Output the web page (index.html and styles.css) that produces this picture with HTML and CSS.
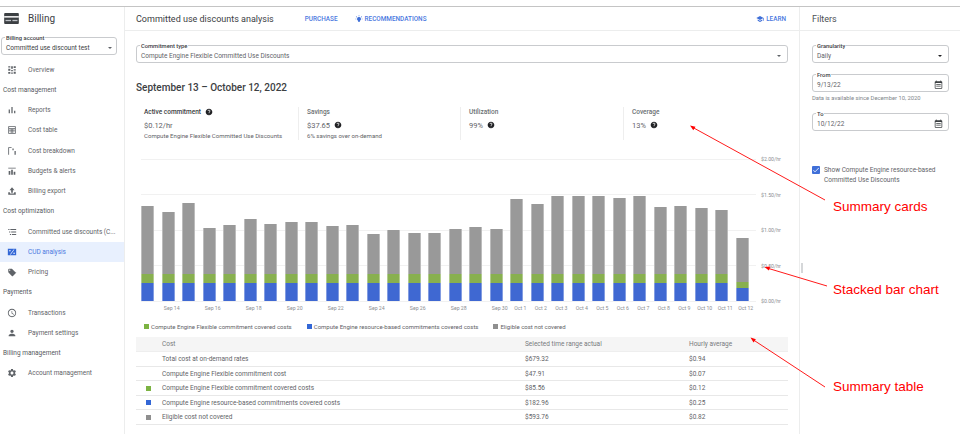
FILE: index.html
```html
<!DOCTYPE html>
<html lang="en">
<head>
    <meta charset="UTF-8">
    <title>Committed use discounts analysis</title>
    <link rel="stylesheet" href="styles.css">
</head>
<body>
    <svg class="icon-defs" width="0" height="0">
        <symbol id="i-help" viewBox="0 0 24 24"><path d="M12 2C6.48 2 2 6.48 2 12s4.48 10 10 10 10-4.48 10-10S17.52 2 12 2zm1 17h-2v-2h2v2zm2.07-7.75l-.9.92C13.45 12.9 13 13.5 13 15h-2v-.5c0-1.1.45-2.1 1.17-2.83l1.24-1.26c.37-.36.59-.86.59-1.41 0-1.1-.9-2-2-2s-2 .9-2 2H8c0-2.21 1.79-4 4-4s4 1.79 4 4c0 .88-.36 1.68-.93 2.25z"/></symbol>
        <symbol id="i-calendar" viewBox="0 0 24 24"><path d="M20 3h-1V1h-2v2H7V1H5v2H4c-1.100 0-2 .9-2 2v16c0 1.100.9 2 2 2h16c1.100 0 2-.9 2-2V5c0-1.100-.9-2-2-2zm0 18H4V8h16v13z"/><path d="M6 11h12v2H6zM6 15h12v2H6z"/></symbol>
    </svg>

    <div class="app">
        <aside class="sidebar">
            <div class="brand">
                <svg class="brand-logo" viewBox="0 0 16 12"><rect width="16" height="12" rx="1" fill="#3c4043"/><rect y="3.400" width="16" height="1.600" fill="#fff"/><rect x="1.500" y="7.500" width="6" height="1.400" fill="#bdc1c6"/><rect x="9" y="7.500" width="5.500" height="1.400" fill="#bdc1c6"/></svg>
                <span>Billing</span>
            </div>
            <div class="field account-field">
                <span class="field-label">Billing account</span>
                <span class="field-value">Committed use discount test</span>
                <span class="caret"></span>
            </div>
            <nav class="nav">
                <a class="nav-item">
                    <svg class="nav-icon" viewBox="0 0 24 24"><path d="M3 3h5v3H3zM3 9h5v5H3zM3 17h5v4H3zM10 3h4v6h-4zM10 12h4v3h-4zM10 18h4v3h-4zM16 3h5v4h-5zM16 10h5v3h-5zM16 16h5v5h-5z"/></svg>
                    Overview
                </a>
                <div class="nav-group">Cost management</div>
                <a class="nav-item">
                    <svg class="nav-icon" viewBox="0 0 24 24"><path d="M4 11h3v9H4zM10.500 5h3v15h-3zM17 14h3v6h-3z"/></svg>
                    Reports
                </a>
                <a class="nav-item">
                    <svg class="nav-icon" viewBox="0 0 24 24"><path d="M3 3h18v18H3zm2 2v3h14V5zm0 5v3h4v-3zm6 0v3h2v-3zm4 0v3h4v-3zM5 15v4h4v-4zm6 0v4h2v-4zm4 0v4h4v-4z" fill-rule="evenodd"/></svg>
                    Cost table
                </a>
                <a class="nav-item">
                    <svg class="nav-icon" viewBox="0 0 24 24"><path d="M3 3h8v2H5v16H3zM13 6h3v4h-3zM18 12h3v9h-3z"/></svg>
                    Cost breakdown
                </a>
                <a class="nav-item">
                    <svg class="nav-icon" viewBox="0 0 24 24"><path d="M3 4h18v2H3zM4 12h4v9H4zM10 9h4v12h-4zM16 14h4v7h-4z"/></svg>
                    Budgets &amp; alerts
                </a>
                <a class="nav-item">
                    <svg class="nav-icon" viewBox="0 0 24 24"><path d="M12 3l6 7h-4v6h-4v-6H6zM3 15h4v3h10v-3h4v6H3z"/></svg>
                    Billing export
                </a>
                <div class="nav-group">Cost optimization</div>
                <a class="nav-item">
                    <svg class="nav-icon" viewBox="0 0 24 24"><path d="M3 5h3v2H3zM8 5h14v2H8zM5 11h3v2H5zM10 11h12v2H10zM7 17h3v2H7zM12 17h10v2H12z"/></svg>
                    Committed use discounts (C...
                </a>
                <a class="nav-item nav-item-active">
                    <svg class="nav-icon" viewBox="0 0 24 24"><path d="M2 4h20v16H2zm5 3a2 2 0 1 0 0 4 2 2 0 0 0 0-4zm10 6a2 2 0 1 0 0 4 2 2 0 0 0 0-4zM16 6L7 18h2l9-12z" fill-rule="evenodd"/></svg>
                    CUD analysis
                </a>
                <a class="nav-item">
                    <svg class="nav-icon" viewBox="0 0 24 24"><path d="M21.410 13.580l-9-9C12.050 4.220 11.550 4 11 4H5c-1.100 0-2 .9-2 2v6c0 .55.22 1.050.59 1.420l8 8c.36.36.86.58 1.410.58s1.050-.22 1.410-.59l7-7c.37-.36.59-.86.59-1.410s-.23-1.060-.59-1.420zM6.500 9C5.670 9 5 8.330 5 7.500S5.670 6 6.500 6 8 6.670 8 7.500 7.330 9 6.500 9z"/></svg>
                    Pricing
                </a>
                <div class="nav-group">Payments</div>
                <a class="nav-item">
                    <svg class="nav-icon" viewBox="0 0 24 24"><path d="M11.990 2C6.470 2 2 6.480 2 12s4.470 10 9.990 10C17.520 22 22 17.520 22 12S17.520 2 11.990 2zM12 20c-4.420 0-8-3.580-8-8s3.580-8 8-8 8 3.580 8 8-3.580 8-8 8zm.5-13H11v6l5.250 3.150.75-1.230-4.500-2.670z"/></svg>
                    Transactions
                </a>
                <a class="nav-item">
                    <svg class="nav-icon" viewBox="0 0 24 24"><path d="M12 12c2.210 0 4-1.790 4-4s-1.790-4-4-4-4 1.790-4 4 1.790 4 4 4zm0 2c-2.670 0-8 1.340-8 4v2h16v-2c0-2.660-5.330-4-8-4z"/></svg>
                    Payment settings
                </a>
                <div class="nav-group">Billing management</div>
                <a class="nav-item">
                    <svg class="nav-icon" viewBox="0 0 24 24"><path d="M19.140 12.940c.04-.3.06-.61.06-.94 0-.32-.02-.64-.07-.94l2.030-1.580c.18-.14.23-.41.12-.61l-1.920-3.320c-.12-.22-.37-.29-.59-.22l-2.390.96c-.5-.38-1.030-.7-1.620-.94l-.36-2.540c-.04-.24-.24-.41-.48-.41h-3.840c-.24 0-.43.17-.47.41l-.36 2.540c-.59.24-1.130.57-1.620.94l-2.390-.96c-.22-.08-.47 0-.59.22L2.740 8.870c-.12.21-.08.47.12.61l2.030 1.580c-.05.3-.09.63-.09.94s.02.64.07.94l-2.030 1.580c-.18.14-.23.41-.12.61l1.920 3.320c.12.22.37.29.59.22l2.390-.96c.5.38 1.030.7 1.620.94l.36 2.540c.05.24.24.41.48.41h3.840c.24 0 .44-.17.47-.41l.36-2.540c.59-.24 1.130-.56 1.620-.94l2.390.96c.22.08.47 0 .59-.22l1.920-3.320c.12-.22.07-.47-.12-.61l-2.010-1.580zM12 15.600c-1.980 0-3.600-1.620-3.600-3.600s1.620-3.600 3.600-3.600 3.600 1.620 3.600 3.600-1.620 3.600-3.600 3.600z"/></svg>
                    Account management
                </a>
            </nav>
        </aside>

        <main class="main">
            <header class="page-header">
                <h1 class="page-title">Committed use discounts analysis</h1>
                <a class="link link-purchase">PURCHASE</a>
                <a class="link">
                    <svg class="link-icon" viewBox="0 0 24 24"><path d="M12 6a6 6 0 0 0-3 11.200V20h6v-2.800A6 6 0 0 0 12 6zM11 1h2v3h-2zM1 11h3v2H1zM20 11h3v2h-3zM4 3.600L6.200 5.800 4.800 7.200 2.600 5zM20 3.600L21.400 5l-2.200 2.200-1.400-1.400z"/></svg>
                    RECOMMENDATIONS
                </a>
                <a class="link link-learn">
                    <svg class="link-icon" viewBox="0 0 24 24"><path d="M5 13.180v4L12 21l7-3.820v-4L12 17l-7-3.820zM12 3L1 9l11 6 9-4.910V17h2V9L12 3z"/></svg>
                    LEARN
                </a>
            </header>

            <div class="content">
                <div class="field">
                    <span class="field-label">Commitment type</span>
                    <span class="field-value">Compute Engine Flexible Committed Use Discounts</span>
                    <span class="caret"></span>
                </div>

                <h2 class="date-range">September 13 – October 12, 2022</h2>

                <section class="cards">
                    <div class="card">
                        <div class="card-label card-label-dark">Active commitment <svg class="help"><use href="#i-help"/></svg></div>
                        <div class="card-value">$0.12/hr</div>
                        <div class="card-note">Compute Engine Flexible Committed Use Discounts</div>
                    </div>
                    <div class="card">
                        <div class="card-label">Savings</div>
                        <div class="card-value">$37.65 <svg class="help"><use href="#i-help"/></svg></div>
                        <div class="card-note">6% savings over on-demand</div>
                    </div>
                    <div class="card">
                        <div class="card-label">Utilization</div>
                        <div class="card-value">99% <svg class="help"><use href="#i-help"/></svg></div>
                    </div>
                    <div class="card">
                        <div class="card-label">Coverage</div>
                        <div class="card-value">13% <svg class="help"><use href="#i-help"/></svg></div>
                    </div>
                </section>

                <section class="chart">
                    <div class="axis-row"><span class="axis-line"></span><span class="axis-label">$2.00/hr</span></div>
                    <div class="axis-row"><span class="axis-line"></span><span class="axis-label">$1.50/hr</span></div>
                    <div class="axis-row"><span class="axis-line"></span><span class="axis-label">$1.00/hr</span></div>
                    <div class="axis-row"><span class="axis-line"></span><span class="axis-label">$0.50/hr</span></div>
                    <div class="axis-row"><span class="axis-line"></span><span class="axis-label">$0.00/hr</span></div>

                    <div class="bars">
                        <div class="bar"><i class="seg-gray" style="height:68px"></i><i class="seg-green"></i><i class="seg-blue"></i></div>
                        <div class="bar"><i class="seg-gray" style="height:62.3px"></i><i class="seg-green"></i><i class="seg-blue"></i></div>
                        <div class="bar"><i class="seg-gray" style="height:70.7px"></i><i class="seg-green"></i><i class="seg-blue"></i></div>
                        <div class="bar"><i class="seg-gray" style="height:46px"></i><i class="seg-green"></i><i class="seg-blue"></i></div>
                        <div class="bar"><i class="seg-gray" style="height:48.7px"></i><i class="seg-green"></i><i class="seg-blue"></i></div>
                        <div class="bar"><i class="seg-gray" style="height:55px"></i><i class="seg-green"></i><i class="seg-blue"></i></div>
                        <div class="bar"><i class="seg-gray" style="height:50px"></i><i class="seg-green"></i><i class="seg-blue"></i></div>
                        <div class="bar"><i class="seg-gray" style="height:52px"></i><i class="seg-green"></i><i class="seg-blue"></i></div>
                        <div class="bar"><i class="seg-gray" style="height:52px"></i><i class="seg-green"></i><i class="seg-blue"></i></div>
                        <div class="bar"><i class="seg-gray" style="height:48px"></i><i class="seg-green"></i><i class="seg-blue"></i></div>
                        <div class="bar"><i class="seg-gray" style="height:48.7px"></i><i class="seg-green"></i><i class="seg-blue"></i></div>
                        <div class="bar"><i class="seg-gray" style="height:40px"></i><i class="seg-green"></i><i class="seg-blue"></i></div>
                        <div class="bar"><i class="seg-gray" style="height:43.7px"></i><i class="seg-green"></i><i class="seg-blue"></i></div>
                        <div class="bar"><i class="seg-gray" style="height:41px"></i><i class="seg-green"></i><i class="seg-blue"></i></div>
                        <div class="bar"><i class="seg-gray" style="height:41px"></i><i class="seg-green"></i><i class="seg-blue"></i></div>
                        <div class="bar"><i class="seg-gray" style="height:44.7px"></i><i class="seg-green"></i><i class="seg-blue"></i></div>
                        <div class="bar"><i class="seg-gray" style="height:46.7px"></i><i class="seg-green"></i><i class="seg-blue"></i></div>
                        <div class="bar"><i class="seg-gray" style="height:44.7px"></i><i class="seg-green"></i><i class="seg-blue"></i></div>
                        <div class="bar"><i class="seg-gray" style="height:74.7px"></i><i class="seg-green"></i><i class="seg-blue"></i></div>
                        <div class="bar"><i class="seg-gray" style="height:69.7px"></i><i class="seg-green"></i><i class="seg-blue"></i></div>
                        <div class="bar"><i class="seg-gray" style="height:78.3px"></i><i class="seg-green"></i><i class="seg-blue"></i></div>
                        <div class="bar"><i class="seg-gray" style="height:78.3px"></i><i class="seg-green"></i><i class="seg-blue"></i></div>
                        <div class="bar"><i class="seg-gray" style="height:78.3px"></i><i class="seg-green"></i><i class="seg-blue"></i></div>
                        <div class="bar"><i class="seg-gray" style="height:76.3px"></i><i class="seg-green"></i><i class="seg-blue"></i></div>
                        <div class="bar"><i class="seg-gray" style="height:78.3px"></i><i class="seg-green"></i><i class="seg-blue"></i></div>
                        <div class="bar"><i class="seg-gray" style="height:67px"></i><i class="seg-green"></i><i class="seg-blue"></i></div>
                        <div class="bar"><i class="seg-gray" style="height:68.3px"></i><i class="seg-green"></i><i class="seg-blue"></i></div>
                        <div class="bar"><i class="seg-gray" style="height:65.7px"></i><i class="seg-green"></i><i class="seg-blue"></i></div>
                        <div class="bar"><i class="seg-gray" style="height:63.7px"></i><i class="seg-green"></i><i class="seg-blue"></i></div>
                        <div class="bar"><i class="seg-gray" style="height:44px"></i><i class="seg-green" style="height:6.3px"></i><i class="seg-blue" style="height:13px"></i></div>
                    </div>

                    <div class="x-labels">
                        <span></span><span>Sep 14</span><span></span><span>Sep 16</span><span></span>
                        <span>Sep 18</span><span></span><span>Sep 20</span><span></span><span>Sep 22</span>
                        <span></span><span>Sep 24</span><span></span><span>Sep 26</span><span></span>
                        <span>Sep 28</span><span></span><span>Sep 30</span><span>Oct 1</span><span>Oct 2</span>
                        <span>Oct 3</span><span>Oct 4</span><span>Oct 5</span><span>Oct 6</span><span>Oct 7</span>
                        <span>Oct 8</span><span>Oct 9</span><span>Oct 10</span><span>Oct 11</span><span>Oct 12</span>
                    </div>
                </section>

                <div class="legend">
                    <span class="legend-item"><i class="swatch swatch-green"></i>Compute Engine Flexible commitment covered costs</span>
                    <span class="legend-item"><i class="swatch swatch-blue"></i>Compute Engine resource-based commitments covered costs</span>
                    <span class="legend-item"><i class="swatch swatch-gray"></i>Eligible cost not covered</span>
                </div>

                <table class="summary">
                    <thead>
                        <tr><th class="col-swatch"></th><th class="col-cost">Cost</th><th class="col-range">Selected time range actual</th><th>Hourly average</th></tr>
                    </thead>
                    <tbody>
                        <tr><td></td><td>Total cost at on-demand rates</td><td>$679.32</td><td>$0.94</td></tr>
                        <tr><td></td><td>Compute Engine Flexible commitment cost</td><td>$47.91</td><td>$0.07</td></tr>
                        <tr><td><i class="swatch swatch-green"></i></td><td>Compute Engine Flexible commitment covered costs</td><td>$85.56</td><td>$0.12</td></tr>
                        <tr><td><i class="swatch swatch-blue"></i></td><td>Compute Engine resource-based commitments covered costs</td><td>$182.96</td><td>$0.25</td></tr>
                        <tr><td><i class="swatch swatch-gray"></i></td><td>Eligible cost not covered</td><td>$593.76</td><td>$0.82</td></tr>
                    </tbody>
                </table>
            </div>
        </main>

        <aside class="filters">
            <h2 class="filters-title">Filters</h2>
            <div class="filters-body">
                <div class="field">
                    <span class="field-label">Granularity</span>
                    <span class="field-value">Daily</span>
                    <span class="caret caret-dark"></span>
                </div>
                <div class="field field-from">
                    <span class="field-label">From</span>
                    <span class="field-value">9/13/22</span>
                    <svg class="calendar"><use href="#i-calendar"/></svg>
                </div>
                <div class="field-hint">Data is available since December 10, 2020</div>
                <div class="field field-to">
                    <span class="field-label">To</span>
                    <span class="field-value">10/12/22</span>
                    <svg class="calendar"><use href="#i-calendar"/></svg>
                </div>
                <div class="checkbox-row">
                    <span class="checkbox"><svg viewBox="0 0 24 24"><path d="M9 16.170L4.830 12l-1.410 1.410L9 19 21 7l-1.410-1.410z"/></svg></span>
                    <span>Show Compute Engine resource-based Committed Use Discounts</span>
                </div>
            </div>
            <span class="resize-handle"></span>
        </aside>
    </div>

    <!-- callouts drawn on top of the screenshot -->
    <svg class="callouts" viewBox="0 0 960 434">
        <g stroke="#f00" stroke-width="0.9" fill="none">
            <path d="M825 200L692 127"/>
            <path d="M827 286L767 268"/>
            <path d="M825 387L752 339"/>
        </g>
        <g fill="#f00">
            <path d="M690 125.500l5.500 1.200-2.200 3.600z"/>
            <path d="M764.500 267l5.600-.6-1.200 4z"/>
            <path d="M750.500 337.500l5.400 1.700-2.400 3.400z"/>
            <text x="833" y="211">Summary cards</text>
            <text x="833" y="294">Stacked bar chart</text>
            <text x="833" y="391">Summary table</text>
        </g>
    </svg>
</body>
</html>
```

FILE: styles.css
```css
* {
    box-sizing: border-box;
}

html, body {
    margin: 0;
    height: 100%;
    overflow: hidden;
}

body {
    position: relative;
    background-color: white;
    color: #5f6368;
    font-family: Roboto, "Liberation Sans", sans-serif;
    font-size: 6.500px;
    padding-top: 6px;
}

.icon-defs {
    position: absolute;
}

.app {
    display: flex;
    height: 428px;
    border-top: 1px solid #c4c4c4;
}

/* sidebar */
.sidebar {
    width: 125px;
    flex-shrink: 0;
    border-right: 1px solid #eceded;
}

.brand {
    display: flex;
    align-items: center;
    gap: 9px;
    height: 23px;
    padding-left: 4px;
    font-size: 10px;
    color: #3c4043;
}

.brand-logo {
    width: 15px;
    height: 11px;
}

.account-field {
    margin: 7px 7px 0 1px;
}

.account-field .caret {
    margin-right: 0;
}

.nav {
    margin-top: 4.500px;
}

.nav-item,
.nav-group {
    display: flex;
    align-items: center;
    height: 20.250px;
    font-size: 6.500px;
    white-space: nowrap;
}

.nav-item {
    padding-left: 7px;
    gap: 11px;
    color: #5f6368;
}

.nav-group {
    padding-left: 3px;
    color: #55595d;
}

.nav-icon {
    width: 10px;
    height: 10px;
    fill: #5f6368;
    flex-shrink: 0;
}

.nav-item-active {
    background-color: #e8f0fe;
    color: #4a78e0;
}

.nav-item-active .nav-icon {
    fill: #3367d6;
}

/* main column */
.main {
    flex: 1;
    min-width: 0;
}

.page-header {
    display: flex;
    align-items: center;
    height: 24px;
    padding: 0 14px 0 11px;
    border-bottom: 1px solid #eceded;
}

.page-title {
    margin: 0 31px 0 0;
    font-size: 9px;
    font-weight: 400;
    color: #3c4043;
}

.link {
    display: flex;
    align-items: center;
    gap: 2px;
    font-size: 6.400px;
    font-weight: 500;
    color: #4a78e0;
}

.link-purchase {
    margin-right: 17px;
}

.link-learn {
    margin-left: auto;
}

.link-icon {
    width: 8px;
    height: 8px;
    fill: #3f6fd8;
}

.content {
    padding: 14px 12px 0 11px;
}

/* outlined fields */
.field {
    position: relative;
    display: flex;
    align-items: center;
    height: 18px;
    padding: 3px 4px 0;
    border: 1px solid #c9cbce;
    border-radius: 3px;
}

.field-label {
    position: absolute;
    top: -3px;
    left: 3px;
    padding: 0 1px;
    background-color: white;
    font-size: 5.800px;
    line-height: 6px;
    font-weight: 500;
    color: #3c4043;
}

.field-value {
    font-size: 6.500px;
    color: #5f6368;
}

.account-field .field-value {
    color: #3c4043;
}

.caret {
    margin-left: auto;
    margin-right: 2px;
    border-left: 2.500px solid transparent;
    border-right: 2.500px solid transparent;
    border-top: 2.500px solid #5f6368;
}

.caret-dark {
    border-top-color: #202124;
}

.calendar {
    width: 9px;
    height: 9px;
    margin-left: auto;
    margin-right: 1px;
    fill: #3c4043;
}

.date-range {
    margin: 18px 0 0;
    font-size: 10px;
    line-height: 14px;
    font-weight: 500;
    color: #3c4043;
}

/* summary cards */
.cards {
    display: grid;
    grid-template-columns: 162px 162px 163px 1fr;
    height: 32px;
    margin-top: 12px;
}

.card {
    padding-left: 8px;
    border-left: 1px solid #eeeeee;
}

.card:first-child {
    border-left: none;
}

.card-label {
    height: 10px;
    font-size: 6.500px;
    line-height: 10px;
    font-weight: 500;
    color: #6b6f73;
}

.card-label-dark {
    color: #3c4043;
}

.card-value {
    display: flex;
    align-items: center;
    gap: 4px;
    height: 14px;
    margin-top: 1px;
    font-size: 7.500px;
    color: #5f6368;
}

.card-label-dark .help {
    vertical-align: -2px;
    margin-left: 2px;
}

.help {
    width: 8px;
    height: 8px;
    fill: #202124;
}

.card-note {
    font-size: 6.050px;
    line-height: 8px;
    color: #5f6368;
    white-space: nowrap;
}

/* stacked bar chart */
.chart {
    position: relative;
    margin: 2.250px 0 0 5px;
}

.axis-row {
    display: flex;
    align-items: center;
    height: 35.500px;
}

.axis-line {
    flex: 1;
    height: 1px;
    background-color: #f1f1f1;
}

.axis-label {
    width: 27px;
    margin-left: 5px;
    font-size: 5.200px;
    color: #8a8d91;
}

.bars {
    position: absolute;
    left: 0;
    bottom: 17.750px;
    display: grid;
    grid-template-columns: repeat(30, 20.500px);
    align-items: end;
}

.bar {
    display: flex;
    flex-direction: column;
    width: 13.400px;
}

.bar i {
    display: block;
    border-left: 0.500px solid rgba(255, 255, 255, 0.35);
    border-right: 0.500px solid rgba(255, 255, 255, 0.35);
}

.seg-gray {
    background-color: #999999;
}

.seg-green {
    height: 8.700px;
    background-color: #88b04f;
}

.seg-blue {
    height: 18.500px;
    background-color: #3f68d2;
}

.x-labels {
    position: absolute;
    left: 0;
    bottom: 7px;
    display: grid;
    grid-template-columns: repeat(30, 20.500px);
    font-size: 5.200px;
    line-height: 7px;
    color: #8a8d91;
}

.x-labels span {
    display: flex;
    justify-content: center;
    white-space: nowrap;
}

/* legend and table */
.legend {
    display: flex;
    align-items: center;
    height: 9px;
    margin-top: 3px;
    padding-left: 8px;
    font-size: 6.030px;
    color: #5f6368;
}

.legend-item {
    display: flex;
    align-items: center;
    gap: 2px;
    margin-right: 15px;
    white-space: nowrap;
}

.swatch {
    display: block;
    width: 5px;
    height: 5px;
}

.swatch-green {
    background-color: #7cb342;
}

.swatch-blue {
    background-color: #3367d6;
}

.swatch-gray {
    background-color: #8f8f8f;
}

.summary {
    width: 100%;
    margin-top: 6.500px;
    border-collapse: collapse;
    table-layout: fixed;
    font-size: 6.500px;
}

.summary th {
    height: 14.500px;
    padding: 0;
    background-color: #f5f5f5;
    border-bottom: 1px solid #eeeeee;
    font-weight: 400;
    text-align: left;
    color: #777a7e;
}

.summary td {
    height: 14.500px;
    padding: 0;
    border-bottom: 1px solid #e8e8e8;
    color: #5f6368;
}

.summary td .swatch {
    margin-left: 10px;
}

.col-swatch {
    width: 26px;
}

.col-cost {
    width: 363px;
}

.col-range {
    width: 164px;
}

/* filters panel */
.filters {
    position: relative;
    width: 161px;
    flex-shrink: 0;
    border-left: 1px solid #eceded;
    margin-left: -1px;
}

.filters-title {
    display: flex;
    align-items: center;
    height: 24px;
    margin: 0;
    padding-left: 12px;
    border-bottom: 1px solid #eceded;
    font-size: 9px;
    font-weight: 400;
    color: #4c5054;
}

.filters-body {
    padding: 14px 11px 0 12px;
}

.field-from {
    margin-top: 11px;
}

.field-hint {
    margin-top: 3px;
    font-size: 5.800px;
    line-height: 7px;
    color: #80868b;
    white-space: nowrap;
}

.field-to {
    margin-top: 11px;
}

.checkbox-row {
    display: flex;
    gap: 4px;
    margin-top: 34px;
    font-size: 6.500px;
    line-height: 10px;
    color: #5f6368;
}

.checkbox {
    flex-shrink: 0;
    width: 8px;
    height: 8px;
    margin-top: 1px;
    border-radius: 1px;
    background-color: #3f6fd8;
}

.checkbox svg {
    display: block;
    fill: white;
}

.resize-handle {
    position: absolute;
    left: 1px;
    top: 256px;
    width: 1.500px;
    height: 10px;
    background-color: #d5d7d9;
}

.callouts {
    position: absolute;
    top: 0;
    left: 0;
    width: 960px;
    height: 434px;
    font-family: "Liberation Sans", sans-serif;
    font-size: 13.500px;
    pointer-events: none;
}
```
